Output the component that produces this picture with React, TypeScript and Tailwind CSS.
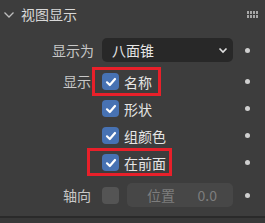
import React from "react";

const font = { fontFamily: '"Noto Sans CJK SC", "Noto Sans", sans-serif' };

function Check() {
  return (
    <div className="w-[17px] h-[17px] rounded-[4px] bg-[#4772b3] flex items-center justify-center shrink-0">
      <svg width="12" height="12" viewBox="0 0 12 12">
        <path d="M2 6.3 L4.8 9 L10 3" fill="none" stroke="#ffffff" strokeWidth="2.2" strokeLinecap="round" strokeLinejoin="round" />
      </svg>
    </div>
  );
}

function Dot() {
  return (
    <div className="w-[27px] flex justify-center">
      <div className="w-[5px] h-[5px] rounded-full bg-[#cfcfcf]" />
    </div>
  );
}

function CheckRow({ label, text, red }: { label?: string; text: string; red?: "a" | "b" }) {
  return (
    <div className="flex items-center h-[27px]">
      <div className="w-[94px] text-right pr-[3px] text-[#c8c8c8] text-[14px]">{label ?? ""}</div>
      <div className="w-[8px]" />
      <div className="relative flex items-center gap-[5px] w-[131px]">
        {red === "a" && (
          <div className="absolute left-[-10px] top-[-6px] w-[69px] h-[29px] border-[3px] border-[#e8202a]" />
        )}
        {red === "b" && (
          <div className="absolute left-[-15px] top-[-6px] w-[85px] h-[28px] border-[3px] border-[#e8202a]" />
        )}
        <Check />
        <span className="text-[#e6e6e6] text-[14px] leading-none">{text}</span>
      </div>
      <div className="w-[1px]" />
      <Dot />
    </div>
  );
}

export default function App() {
  return (
    <div style={font} className="w-[265px] h-[223px] bg-[#3d3d3d] flex flex-col overflow-hidden">
      <div className="h-[29px] flex items-center shrink-0">
        <svg width="12" height="8" viewBox="0 0 12 8" className="ml-[3px]">
          <path d="M1.5 1.5 L6 6 L10.5 1.5" fill="none" stroke="#bdbdbd" strokeWidth="1.3" />
        </svg>
        <span className="ml-[6px] text-[#d8d8d8] text-[14px]">视图显示</span>
        <div className="ml-auto mr-[7px] grid grid-cols-4 gap-x-[1px] gap-y-[1px]">
          {Array.from({ length: 8 }).map((_, i) => (
            <div key={i} className="w-[2px] h-[3px] bg-[#a8a8a8]" />
          ))}
        </div>
      </div>
      <div className="h-[9px] shrink-0" />
      <div className="flex items-center h-[24px] shrink-0">
        <div className="w-[94px] text-right text-[#c8c8c8] text-[14px]">显示为</div>
        <div className="w-[8px]" />
        <div className="w-[131px] h-[24px] rounded-[5px] bg-[#282828] flex items-center pl-[10px] pr-[4px]">
          <span className="text-[#e6e6e6] text-[14px]">八面锥</span>
          <svg width="10" height="7" viewBox="0 0 10 7" className="ml-auto mr-[1px]">
            <path d="M1.5 1.5 L5 5 L8.5 1.5" fill="none" stroke="#e0e0e0" strokeWidth="1.6" />
          </svg>
        </div>
        <div className="w-[1px]" />
        <Dot />
      </div>
      <div className="h-[6px] shrink-0" />
      <CheckRow label="显示" text="名称" red="a" />
      <CheckRow text="形状" />
      <CheckRow text="组颜色" />
      <CheckRow text="在前面" red="b" />
      <div className="h-[7px] shrink-0" />
      <div className="flex items-center h-[24px] shrink-0">
        <div className="w-[94px] text-right pr-[3px] text-[#c8c8c8] text-[14px]">轴向</div>
        <div className="w-[8px]" />
        <div className="w-[131px] flex items-center gap-[8px]">
          <div className="w-[17px] h-[17px] rounded-[4px] bg-[#545454] shrink-0" />
          <div className="flex-1 h-[24px] rounded-[5px] bg-[#474747] flex items-center pl-[20px] pr-[16px]">
            <span className="text-[#7d7d7d] text-[14px]">位置</span>
            <span className="ml-auto text-[#7d7d7d] text-[14px]">0.0</span>
          </div>
        </div>
        <div className="w-[1px]" />
        <Dot />
      </div>
      <div className="h-[9px] shrink-0" />
      <div className="h-[2px] bg-[#2a2a2a] shrink-0" />
      <div className="flex-1 bg-[#383838]" />
    </div>
  );
}
